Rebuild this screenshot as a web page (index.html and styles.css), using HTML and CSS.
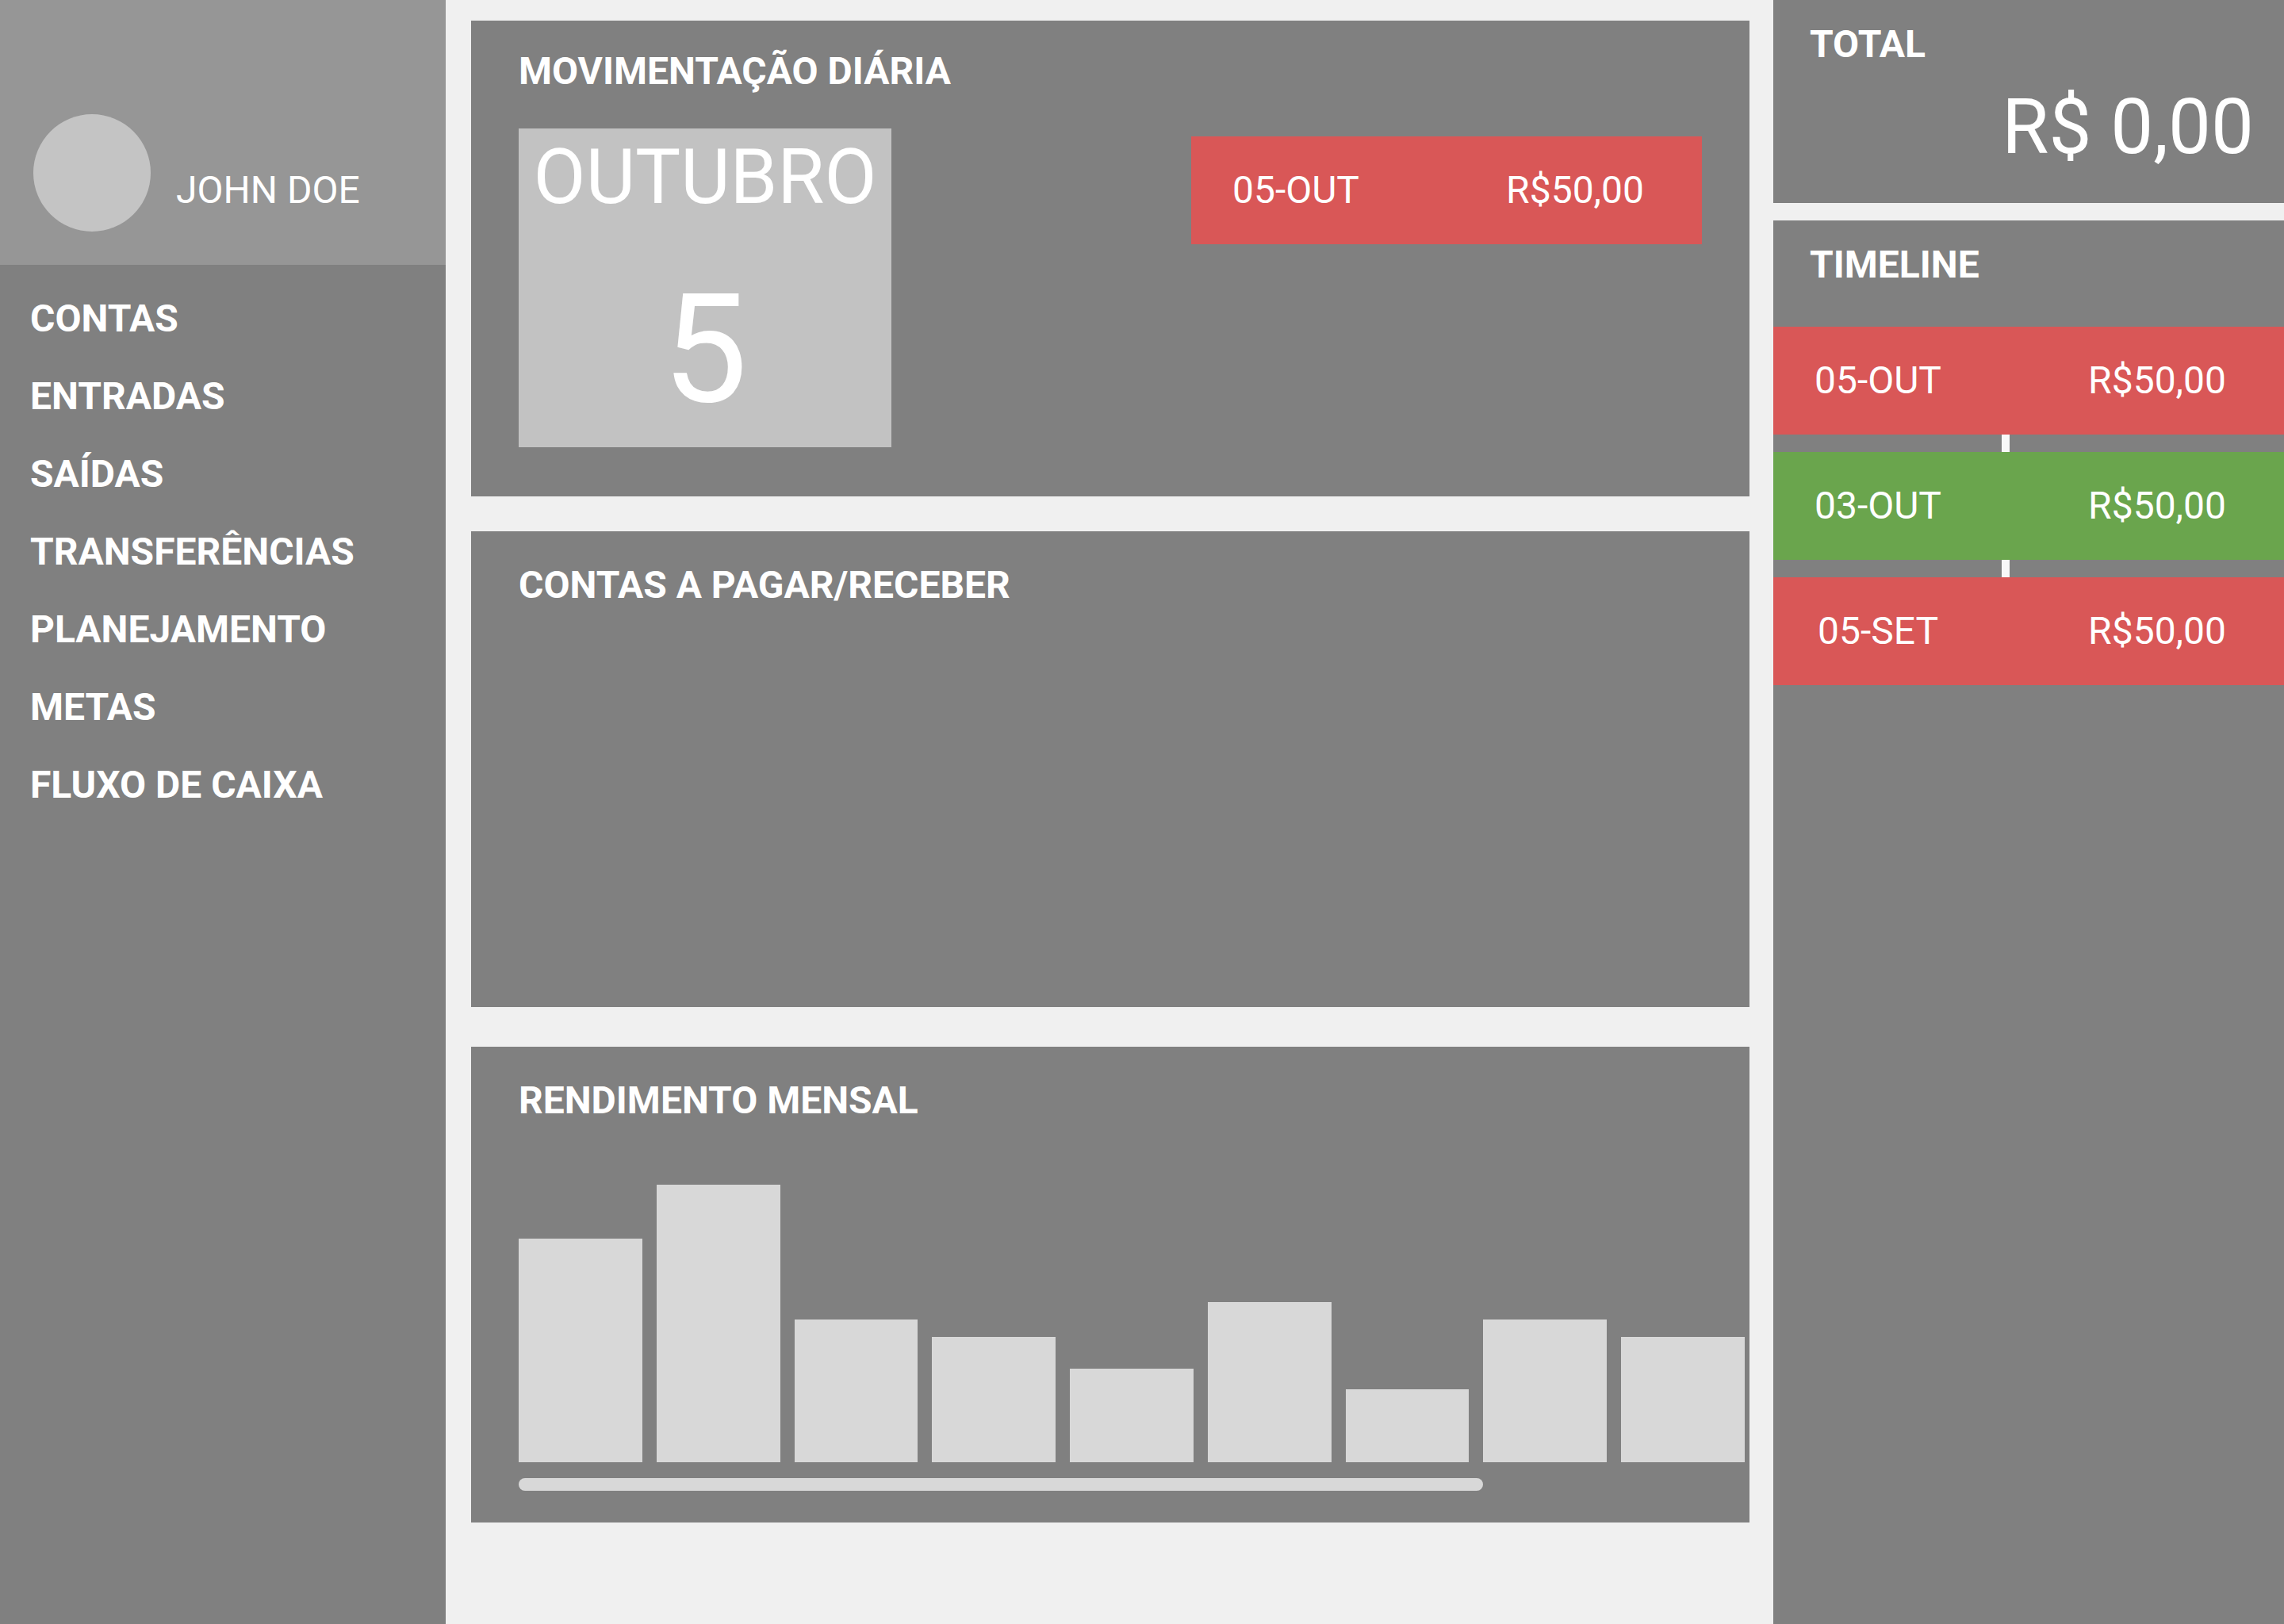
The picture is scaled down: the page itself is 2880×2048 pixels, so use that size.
FILE: index.html
```html
<!DOCTYPE html>
<html lang="pt-BR">
<head>
  <meta charset="utf-8">
  <meta name="viewport" content="width=device-width, initial-scale=1">
  <title>Finanças</title>
  <link rel="stylesheet" href="styles.css">
</head>
<body>
  <div class="layout">
    <aside class="sidebar">
      <header class="profile">
        <span class="avatar"></span>
        <span class="profile-name">JOHN DOE</span>
      </header>
      <nav class="menu">
        <a href="#contas">CONTAS</a>
        <a href="#entradas">ENTRADAS</a>
        <a href="#saidas">SAÍDAS</a>
        <a href="#transferencias">TRANSFERÊNCIAS</a>
        <a href="#planejamento">PLANEJAMENTO</a>
        <a href="#metas">METAS</a>
        <a href="#fluxo">FLUXO DE CAIXA</a>
      </nav>
    </aside>

    <main class="content">
      <section class="card card-daily">
        <h2 class="title">MOVIMENTAÇÃO DIÁRIA</h2>
        <div class="daily">
          <div class="calendar">
            <span class="month">OUTUBRO</span>
            <span class="day">5</span>
          </div>
          <div class="entry entry-out daily-entry">
            <span class="entry-date">05-OUT</span>
            <span>R$50,00</span>
          </div>
        </div>
      </section>

      <section class="card">
        <h2 class="title">CONTAS A PAGAR/RECEBER</h2>
      </section>

      <section class="card card-income">
        <h2 class="title">RENDIMENTO MENSAL</h2>
        <div class="chart-area">
          <div class="chart">
            <div class="bar" style="height: 282px"></div>
            <div class="bar" style="height: 350px"></div>
            <div class="bar" style="height: 180px"></div>
            <div class="bar" style="height: 158px"></div>
            <div class="bar" style="height: 118px"></div>
            <div class="bar" style="height: 202px"></div>
            <div class="bar" style="height: 92px"></div>
            <div class="bar" style="height: 180px"></div>
            <div class="bar" style="height: 158px"></div>
          </div>
          <div class="scroll-thumb" style="width: 78.65%"></div>
        </div>
      </section>
    </main>

    <aside class="summary">
      <section class="total">
        <h2 class="title">TOTAL</h2>
        <p class="total-value">R$ 0,00</p>
      </section>
      <section class="timeline">
        <h2 class="title timeline-title">TIMELINE</h2>
        <ul class="timeline-list">
          <li class="entry entry-out"><span class="entry-date">05-OUT</span><span>R$50,00</span></li>
          <li class="entry entry-in"><span class="entry-date">03-OUT</span><span>R$50,00</span></li>
          <li class="entry entry-out"><span class="entry-date">05-SET</span><span>R$50,00</span></li>
        </ul>
      </section>
    </aside>
  </div>
</body>
</html>
```

FILE: styles.css
```css
* {
  box-sizing: border-box;
}

body {
  margin: 0;
  background: #f0f0f0;
  color: #fff;
  font-family: Roboto, "Liberation Sans", sans-serif;
  font-size: 48px;
  line-height: 56px;
}

.layout {
  display: grid;
  grid-template-columns: 562px minmax(0, 1fr) 644px;
  min-height: 100vh;
}

.title {
  margin: 0;
  font-size: 48px;
  font-weight: 700;
}

/* Sidebar */
.sidebar {
  background: #808080;
}

.profile {
  display: flex;
  align-items: flex-end;
  gap: 32px;
  padding: 144px 42px 42px;
  background: #969696;
}

.avatar {
  flex: none;
  width: 148px;
  height: 148px;
  border-radius: 50%;
  background: #c4c4c4;
}

.profile-name {
  padding-bottom: 24px;
}

.menu {
  display: flex;
  flex-direction: column;
  align-items: flex-start;
  gap: 42px;
  padding: 40px 38px;
}

.menu a {
  color: inherit;
  font-weight: 700;
  text-decoration: none;
}

/* Main column */
.content {
  display: flex;
  flex-direction: column;
  padding: 26px 30px 128px 32px;
}

.card {
  min-height: 600px;
  padding: 40px 60px;
  background: #808080;
}

.card-daily {
  margin-bottom: 44px;
  padding-top: 36px;
}

.daily {
  display: flex;
  justify-content: space-between;
  align-items: flex-start;
  margin-top: 44px;
}

.calendar {
  display: flex;
  flex-direction: column;
  gap: 50px;
  width: 470px;
  padding: 5px 0 11px;
  background: #c2c2c2;
  text-align: center;
}

.month {
  font-size: 96px;
  line-height: 112px;
}

.day {
  font-size: 192px;
  line-height: 224px;
}

.daily-entry {
  width: 644px;
  margin-top: 10px;
}

.entry {
  display: flex;
  justify-content: space-between;
  align-items: center;
  height: 136px;
  padding: 0 73px 0 52px;
}

.entry-out {
  background: #d95757;
}

.entry-in {
  background: #6aa54d;
}

.entry-date {
  width: 160px;
  text-align: center;
}

.card-income {
  margin-top: 50px;
  padding-right: 6px;
}

.chart-area {
  margin-top: 78px;
}

.chart {
  display: flex;
  align-items: flex-end;
  gap: 18px;
  height: 350px;
}

.bar {
  flex: 1;
  background: #d8d8d8;
}

.scroll-thumb {
  height: 16px;
  margin-top: 20px;
  border-radius: 8px;
  background: #d8d8d8;
}

/* Right column */
.summary {
  display: flex;
  flex-direction: column;
  gap: 22px;
}

.total {
  padding: 28px 38px 40px 46px;
  background: #808080;
}

.total-value {
  margin: 20px 0 0;
  font-size: 96px;
  line-height: 112px;
  text-align: right;
}

.timeline {
  flex: 1;
  padding-top: 28px;
  background: #808080;
}

.timeline-title {
  padding-left: 46px;
}

.timeline-list {
  display: flex;
  flex-direction: column;
  gap: 22px;
  margin: 50px 0 0;
  padding: 0;
  /* The line shows only in the gaps between entries */
  background: linear-gradient(#f8f8f8, #f8f8f8) 288px 0 / 10px 100% no-repeat;
  list-style: none;
}
```
